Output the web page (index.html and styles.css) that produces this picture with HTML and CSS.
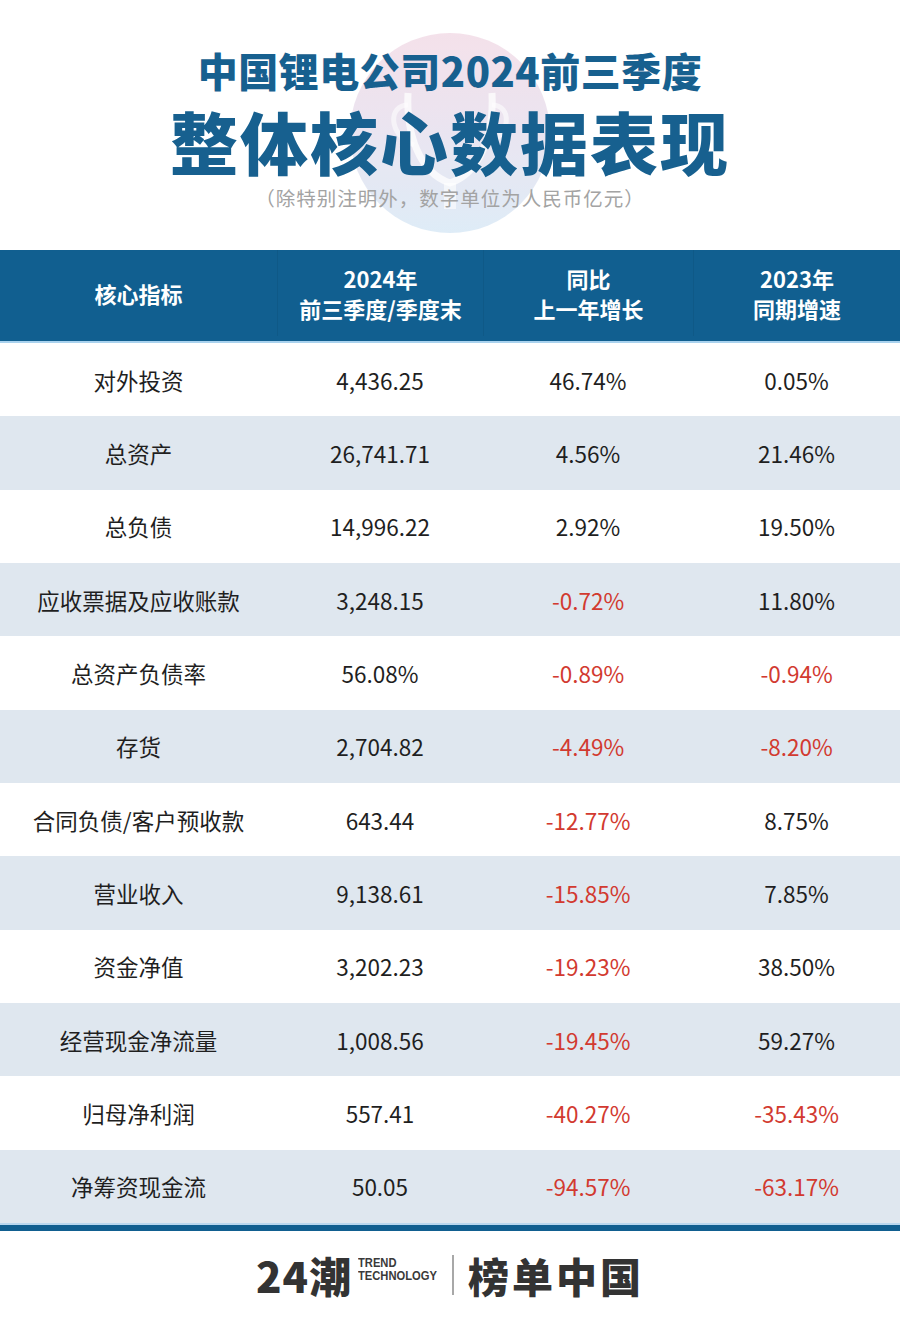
FILE: index.html
```html
<!DOCTYPE html>
<html lang="zh-CN">
<head>
<meta charset="utf-8">
<title>中国锂电公司2024前三季度整体核心数据表现</title>
<link rel="stylesheet" href="styles.css">
</head>
<body>
<div class="page">
  <header class="hero">
    <div class="badge" aria-hidden="true">
      <svg class="trophy" width="200" height="200" viewBox="0 0 200 200">
        <path d="M58 60 C56 102 70 140 100 150 C130 140 144 102 142 60" fill="none" stroke="#ffffff" stroke-width="7" stroke-opacity="0.75"/>
        <path d="M58 72 C38 72 38 102 64 112" fill="none" stroke="#ffffff" stroke-width="5" stroke-opacity="0.55"/>
        <path d="M142 72 C162 72 162 102 136 112" fill="none" stroke="#ffffff" stroke-width="5" stroke-opacity="0.55"/>
        <rect x="94" y="150" width="12" height="26" fill="#ffffff" fill-opacity="0.6"/>
      </svg>
    </div>
    <h1 class="title-1">中国锂电公司2024前三季度</h1>
    <h2 class="title-2">整体核心数据表现</h2>
    <p class="note">（除特别注明外，数字单位为人民币亿元）</p>
  </header>

  <section class="table">
    <div class="thead">
      <div class="th">核心指标</div>
      <div class="th">2024年<br>前三季度/季度末</div>
      <div class="th">同比<br>上一年增长</div>
      <div class="th">2023年<br>同期增速</div>
    </div>
    <div class="tbody">
      <div class="tr"><div class="td">对外投资</div><div class="td">4,436.25</div><div class="td">46.74%</div><div class="td">0.05%</div></div>
      <div class="tr alt"><div class="td">总资产</div><div class="td">26,741.71</div><div class="td">4.56%</div><div class="td">21.46%</div></div>
      <div class="tr"><div class="td">总负债</div><div class="td">14,996.22</div><div class="td">2.92%</div><div class="td">19.50%</div></div>
      <div class="tr alt"><div class="td">应收票据及应收账款</div><div class="td">3,248.15</div><div class="td neg">-0.72%</div><div class="td">11.80%</div></div>
      <div class="tr"><div class="td">总资产负债率</div><div class="td">56.08%</div><div class="td neg">-0.89%</div><div class="td neg">-0.94%</div></div>
      <div class="tr alt"><div class="td">存货</div><div class="td">2,704.82</div><div class="td neg">-4.49%</div><div class="td neg">-8.20%</div></div>
      <div class="tr"><div class="td">合同负债/客户预收款</div><div class="td">643.44</div><div class="td neg">-12.77%</div><div class="td">8.75%</div></div>
      <div class="tr alt"><div class="td">营业收入</div><div class="td">9,138.61</div><div class="td neg">-15.85%</div><div class="td">7.85%</div></div>
      <div class="tr"><div class="td">资金净值</div><div class="td">3,202.23</div><div class="td neg">-19.23%</div><div class="td">38.50%</div></div>
      <div class="tr alt"><div class="td">经营现金净流量</div><div class="td">1,008.56</div><div class="td neg">-19.45%</div><div class="td">59.27%</div></div>
      <div class="tr"><div class="td">归母净利润</div><div class="td">557.41</div><div class="td neg">-40.27%</div><div class="td neg">-35.43%</div></div>
      <div class="tr alt"><div class="td">净筹资现金流</div><div class="td">50.05</div><div class="td neg">-94.57%</div><div class="td neg">-63.17%</div></div>
    </div>
    <div class="tfoot"></div>
  </section>

  <footer class="footer">
    <div class="brand-a">
      <span class="mark">24潮</span>
      <span class="trend">TREND<br>TECHNOLOGY</span>
    </div>
    <span class="sep"></span>
    <div class="brand-b">榜单中国</div>
  </footer>
</div>
</body>
</html>
```
FILE: styles.css
```css
* { box-sizing: border-box; }
html, body { margin: 0; padding: 0; background: #ffffff; }
body {
  font-family: "Noto Sans CJK SC", "Noto Sans", sans-serif;
  color: #1f1f1f;
}
.page { width: 900px; height: 1320px; overflow: hidden; }

.hero {
  position: relative;
  height: 250px;
  display: flex;
  flex-direction: column;
  align-items: center;
}
.badge {
  position: absolute;
  left: 350px;
  top: 33px;
  width: 200px;
  height: 200px;
  border-radius: 50%;
  background: linear-gradient(180deg, #f3dce7 0%, #e8e0ee 45%, #d9e9f6 100%);
  opacity: 0.85;
}
.trophy { display: block; }
.title-1, .title-2, .note { position: relative; margin: 0; }
.title-1 {
  margin-top: 48px;
  font-size: 40px;
  line-height: 44px;
  font-weight: 900;
  color: #17608f;
  letter-spacing: 0.5px;
}
.title-2 {
  margin-top: 14px;
  font-size: 68px;
  line-height: 70px;
  font-weight: 900;
  color: #17608f;
  letter-spacing: 2px;
}
.note {
  margin-top: 10px;
  font-size: 19.5px;
  line-height: 24px;
  color: #a3a3a3;
  font-weight: 400;
  letter-spacing: 1px;
}

.table { width: 900px; }
.thead, .tr {
  display: grid;
  grid-template-columns: 277px 206px 210px 207px;
}
.thead {
  height: 93px;
  background: #115f90;
  border-bottom: 2px solid #a9d2ee;
  padding-bottom: 5px;
}
.th {
  display: flex;
  align-items: center;
  justify-content: center;
  text-align: center;
  color: #ffffff;
  font-size: 22px;
  line-height: 30px;
  font-weight: 700;
}
.th + .th { border-left: 1px solid #0f5987; }
.tr { height: 73.33px; background: #ffffff; }
.tr.alt { background: #dfe7ef; }
.td {
  display: flex;
  align-items: center;
  justify-content: center;
  font-size: 22.5px;
  color: #1f1f1f;
  font-weight: 400;
}
.td.neg { color: #d23a30; }
.tfoot {
  height: 8px;
  border-top: 2px solid #b9d7ee;
  background: #115f90;
}

.footer {
  height: 90px;
  display: flex;
  align-items: center;
  justify-content: center;
  gap: 14px;
  color: #333333;
  padding-bottom: 2px;
}
.brand-a { display: flex; align-items: center; gap: 6px; }
.mark {
  font-size: 42px;
  font-weight: 900;
  line-height: 44px;
  letter-spacing: 1px;
  color: #333333;
}
.trend {
  font-family: "Liberation Sans", Arial, sans-serif;
  font-size: 13px;
  line-height: 13px;
  font-weight: 700;
  transform: scaleX(0.86);
  transform-origin: left center;
  margin-top: -12px;
  margin-right: -10px;
  color: #3a3a3a;
}
.sep {
  width: 2px;
  height: 40px;
  background: #a8a8a8;
  margin-left: -2px;
}
.brand-b {
  font-size: 41px;
  font-weight: 900;
  line-height: 44px;
  color: #333333;
  letter-spacing: 3px;
}
```
